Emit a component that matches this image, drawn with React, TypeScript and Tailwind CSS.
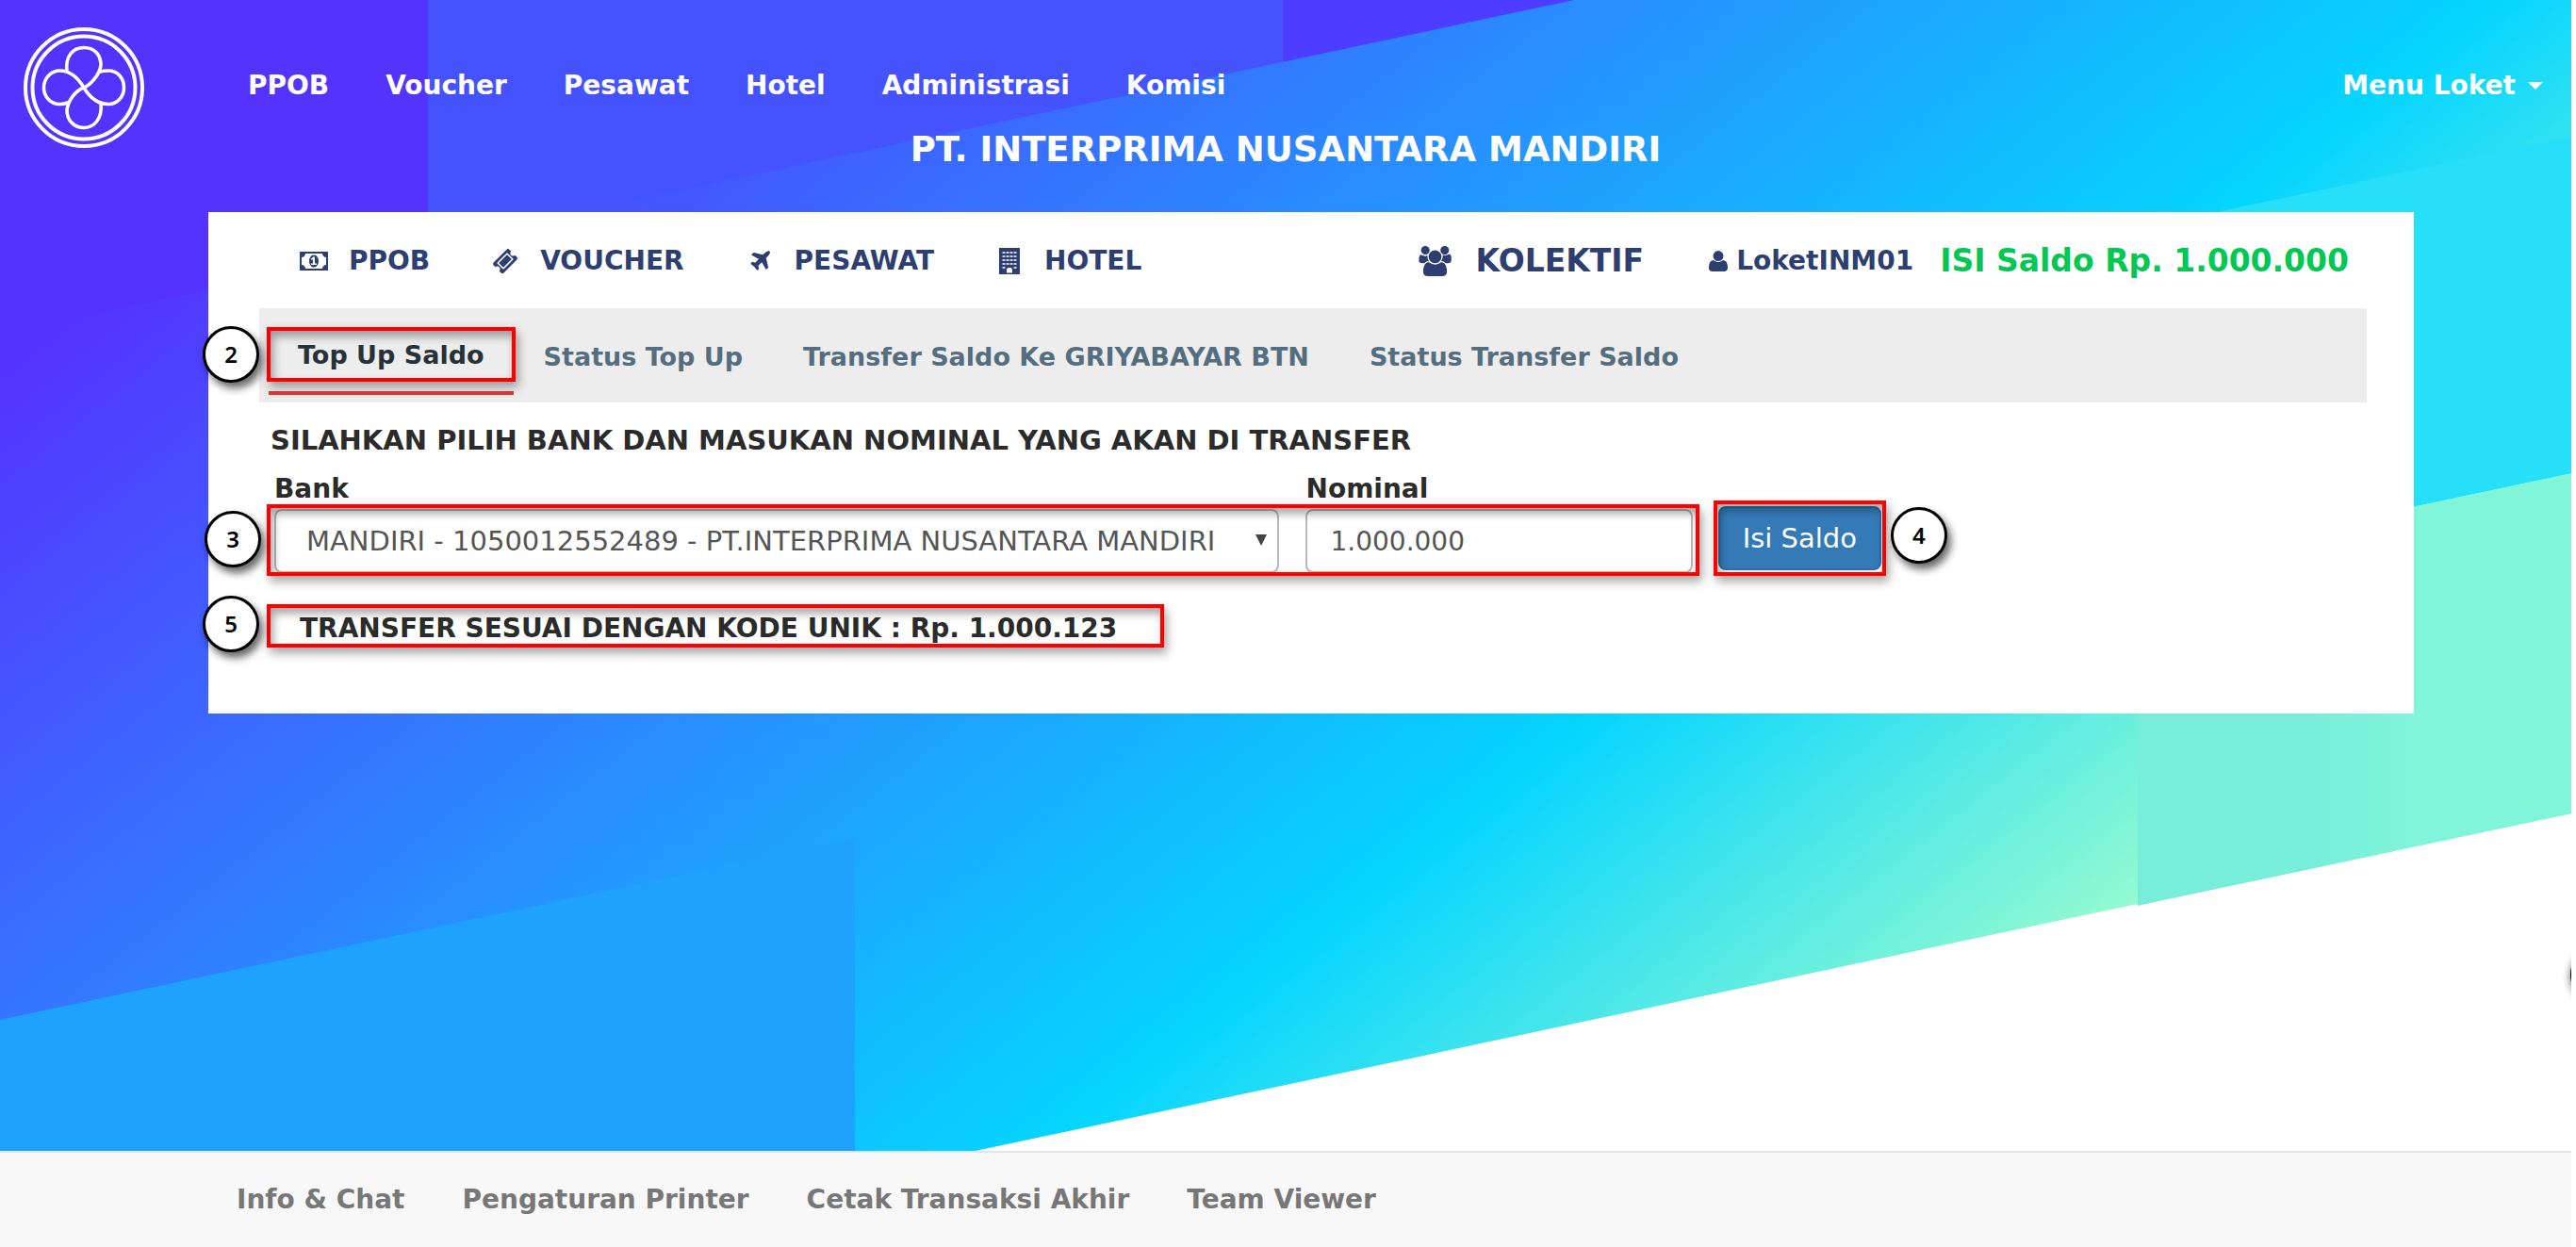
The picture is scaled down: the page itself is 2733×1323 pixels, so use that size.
import type { ReactNode } from "react";

const shadowBox =
  "pointer-events-none absolute border-4 border-[#ff0000] shadow-[3px_6px_10px_rgba(0,0,0,0.35),inset_3px_6px_10px_rgba(0,0,0,0.35)]";

function Callout({ n, className }: { n: string; className: string }) {
  return (
    <span
      className={`absolute flex size-[60px] items-center justify-center rounded-full border-3 border-black bg-white font-['Noto_Sans'] text-[24px] leading-none font-semibold text-black shadow-[4px_6px_8px_rgba(0,0,0,0.6)] ${className}`}
    >
      {n}
    </span>
  );
}

function Logo() {
  return (
    <svg viewBox="0 0 128 128" className="size-[128px]" fill="none" stroke="#fff" role="img" aria-label="Logo">
      <circle cx="64" cy="64" r="62" strokeWidth="4" />
      <circle cx="64" cy="64" r="54.5" strokeWidth="4" />
      <g strokeWidth="3.6" strokeLinecap="round">
        <path d="M46 47C44 31 52 21.500 64 21.500S82 30 82 40C81 50 71 61 64 64C55 67 47 78 46 88C46 99 54 106.500 64 106.500S84 98 82 80" />
        <path d="M82 47C84 46 88 46 90 46C100 46 106.500 54 106.500 64S99 81.500 90 81.500C78 81.500 70 74 64 64C58 54 50 46 38.500 46C29 46 21.500 54 21.500 64S29 81.500 38.500 81.500C41 81.500 44 81 46.500 80" />
      </g>
    </svg>
  );
}

function MoneyIcon() {
  return (
    <svg viewBox="0 256 1920 1280" className="h-[20px] w-[30px]" fill="currentColor" aria-hidden="true">
      <path d="M768 1152h384v-96h-128v-448h-114l-148 137 77 80q42-37 55-57h2v288h-128v96zm512-256q0 70-21 142t-59.5 134-101.5 101-138 39-138-39-101.5-101-59.5-134-21-142 21-142 59.5-134 101.5-101 138-39 138 39 101.5 101 59.5 134 21 142zm512 256v-512q-106 0-181-75t-75-181h-1152q0 106-75 181t-181 75v512q106 0 181 75t75 181h1152q0-106 75-181t181-75zm128-832v1152q0 26-19 45t-45 19h-1792q-26 0-45-19t-19-45v-1152q0-26 19-45t45-19h1792q26 0 45 19t19 45z" />
    </svg>
  );
}

function TicketIcon() {
  return (
    <svg viewBox="50 50 1692 1692" className="size-[26px]" fill="currentColor" aria-hidden="true">
      <path d="M1024 452l316 316-572 572-316-316zm-211 979l618-618q19-19 19-45t-19-45l-362-362q-18-18-45-18t-45 18l-618 618q-19 19-19 45t19 45l362 362q18 18 45 18t45-18zm889-637l-907 908q-37 37-90.5 37t-90.5-37l-126-126q56-56 56-136t-56-136-136-56-136 56l-125-126q-37-37-37-90.5t37-90.500l907-906q37-37 90.5-37t90.5 37l125 125q-56 56-56 136t56 136 136 56 136-56l126 125q37 37 37 90.5t-37 90.5z" />
    </svg>
  );
}

function PlaneIcon() {
  return (
    <svg viewBox="100 120 1500 1500" className="size-[22px]" fill="currentColor" aria-hidden="true">
      <path d="M1568 160q44 52 12 148t-108 172l-161 161 160 696q5 19-12 33l-128 96q-7 6-19 6-4 0-7-1-15-3-21-16l-279-508-259 259 53 194q5 17-8 31l-96 96q-9 9-23 9h-2q-15-2-24-13l-189-252-252-189q-11-7-13-23-1-13 9-25l96-97q9-9 23-9 6 0 8 1l194 53 259-259-508-279q-14-8-17-24-2-16 9-27l128-128q14-13 30-8l665 159 160-160q76-76 172-108t148 12z" />
    </svg>
  );
}

function BuildingIcon() {
  return (
    <svg viewBox="0 0 22 28" className="h-[28px] w-[22px]" aria-hidden="true">
      <path d="M0 0h22v28H0z" fill="currentColor" />
      <path
        d="M3.500 5h15M3.500 9h15M3.500 13h15M3.500 17h15M3.500 21h3M15.500 21h3"
        stroke="#fff"
        strokeWidth="1.500"
        strokeDasharray="3 1"
      />
      <path d="M8 26.500v-4l1.500-1.500h3l1.500 1.500v4z" fill="#fff" />
    </svg>
  );
}

function UsersIcon() {
  return (
    <svg viewBox="0 0 1920 1792" className="h-[32px] w-[35px]" fill="currentColor" aria-hidden="true">
      <path d="M593 896q-162 5-265 128h-134q-82 0-138-40.5t-56-118.5q0-353 124-353 6 0 43.5 21t97.5 42.5 119 21.5q67 0 133-23-5 37-5 66 0 159 93 294zm1071 637q0 120-73 189.5t-194 69.5h-874q-121 0-194-69.5t-73-189.5q0-53 3.5-103.5t14-109 26.5-108.5 43-97.5 62-81 85.5-53.5 111.5-20q10 0 43 21.5t73 48 107 48 135 21.5 135-21.5 107-48 73-48 43-21.5q61 0 111.5 20t85.5 53.5 62 81 43 97.5 26.5 108.5 14 109 3.5 103.5zm-1024-1277q0 106-75 181t-181 75-181-75-75-181 75-181 181-75 181 75 75 181zm704 384q0 159-112.500 271.5t-271.5 112.5-271.5-112.5-112.5-271.5 112.5-271.5 271.5-112.5 271.5 112.5 112.5 271.5zm576 225q0 78-56 118.5t-138 40.5h-134q-103-123-265-128 93-135 93-294 0-29-5-66 66 23 133 23 59 0 119-21.5t97.5-42.5 43.5-21q124 0 124 353zm-128-609q0 106-75 181t-181 75-181-75-75-181 75-181 181-75 181 75 75 181z" />
    </svg>
  );
}

function UserIcon() {
  return (
    <svg viewBox="0 256 1408 1536" className="h-[24px] w-[20px]" fill="currentColor" aria-hidden="true">
      <path d="M1408 1533q0 120-73 189.5t-194 69.5h-874q-121 0-194-69.5t-73-189.5q0-53 3.5-103.5t14-109 26.5-108.5 43-97.5 62-81 85.5-53.5 111.5-20q9 0 42 21.5t74.5 48 108 48 133.5 21.5 133.5-21.5 108-48 74.500-48 42-21.500q61 0 111.5 20t85.5 53.5 62 81 43 97.5 26.5 108.5 14 109 3.5 103.5zm-320-893q0 159-112.5 271.5t-271.5 112.5-271.5-112.5-112.5-271.5 112.5-271.5 271.5-112.5 271.5 112.5 112.5 271.5z" />
    </svg>
  );
}

function Stripes() {
  return (
    <div className="absolute inset-0 overflow-hidden" aria-hidden="true">
      <div className="absolute inset-x-0 -top-[63px] h-[1504px] origin-top-left -skew-y-12 bg-[linear-gradient(150deg,#5533ff_15%,#05d5ff_70%,#a6ffcb_94%)]">
        <div className="mr-[6px] grid grid-cols-6 grid-rows-[418px_370px_357px_361px]">
          <span className="col-start-1 row-start-1 bg-[#5533ff]" />
          <span className="col-span-2 col-start-2 row-start-1 bg-[#4553ff]" />
          <span className="col-span-3 col-start-4 row-start-1 bg-[#4f3dff]" />
          <span className="col-span-2 col-start-5 row-start-3 -mr-[6px] bg-[#26dff9]" />
          <span className="col-span-2 col-start-1 row-start-4 bg-[#1fa2ff]" />
          <span className="col-start-6 row-start-4 -mr-[6px] bg-[linear-gradient(90deg,#76eed9_40%,#81f5da_64%)]" />
        </div>
      </div>
    </div>
  );
}

function ServiceLink({ icon, children }: { icon: ReactNode; children: ReactNode }) {
  return (
    <a href="#" className="flex items-center gap-[22px]">
      <span className="flex w-[30px] justify-center">{icon}</span>
      {children}
    </a>
  );
}

const mainMenu = ["PPOB", "Voucher", "Pesawat", "Hotel", "Administrasi", "Komisi"];
const tabs = ["Status Top Up", "Transfer Saldo Ke GRIYABAYAR BTN", "Status Transfer Saldo"];
const footerMenu = ["Info & Chat", "Pengaturan Printer", "Cetak Transaksi Akhir", "Team Viewer"];

export default function App() {
  return (
    <div className="flex min-h-screen flex-col overflow-hidden bg-white pr-[5px] font-['Verdana','DejaVu_Sans',sans-serif] text-[28px] leading-[40px] font-bold whitespace-nowrap">
      <div className="relative flex-1 overflow-hidden">
        <Stripes />
        <div className="relative">
          <header className="flex h-[135px] items-start pt-[29px] pr-[30px] pl-[25px] text-white">
            <Logo />
            <nav className="mt-[42px] ml-[110px] flex gap-[60px]">
              {mainMenu.map((item) => (
                <a key={item} href="#">
                  {item}
                </a>
              ))}
            </nav>
            <button type="button" className="mt-[42px] ml-auto flex items-center gap-[13px]">
              Menu Loket
              <svg viewBox="0 0 16 8" className="h-[8px] w-[16px]" fill="#fff" aria-hidden="true">
                <path d="M0 0h16l-8 8z" />
              </svg>
            </button>
          </header>
          <h1 className="text-center text-[37px] leading-[48px] text-white">PT. INTERPRIMA NUSANTARA MANDIRI</h1>

          <main className="mt-[42px] mr-[167px] ml-[221px] bg-white pb-[70px] text-[#2b2b2b]">
            <div className="flex pt-[32px] pr-[69px] pl-[97px] text-[#2c3f70]">
              <nav className="flex gap-[65px]">
                <ServiceLink icon={<MoneyIcon />}>PPOB</ServiceLink>
                <ServiceLink icon={<TicketIcon />}>VOUCHER</ServiceLink>
                <ServiceLink icon={<PlaneIcon />}>PESAWAT</ServiceLink>
                <ServiceLink icon={<BuildingIcon />}>HOTEL</ServiceLink>
              </nav>
              <div className="ml-auto flex items-center text-[33px]">
                <a href="#" className="flex items-center gap-[26px]">
                  <UsersIcon />
                  KOLEKTIF
                </a>
                <a href="#" className="ml-[69px] flex items-center gap-[9px] text-[28px]">
                  <UserIcon />
                  LoketINM01
                </a>
                <a href="#" className="ml-[28px] text-[#00c853]">
                  ISI Saldo Rp. 1.000.000
                </a>
              </div>
            </div>

            <nav className="mt-[30px] mr-[50px] ml-[54px] flex h-[100px] bg-[#ededed] pl-[10px] text-[27px] text-[#546e7f]">
              <a
                href="#"
                aria-current="page"
                className="relative h-[92px] border-b-4 border-[#e53935] px-[31px] pt-[30px] text-[#263238]"
              >
                Top Up Saldo
                <span className={`${shadowBox} top-[20px] -right-[2px] -left-[2px] h-[58px]`} />
                <Callout n="2" className="top-[19px] -left-[70px]" />
              </a>
              {tabs.map((tab) => (
                <a key={tab} href="#" className="px-[32px] pt-[32px]">
                  {tab}
                </a>
              ))}
            </nav>

            <h2 className="mt-[20px] ml-[66px] text-[29px]">
              SILAHKAN PILIH BANK DAN MASUKAN NOMINAL YANG AKAN DI TRANSFER
            </h2>
            <form className="mt-[12px] mr-[13px] ml-[70px] flex items-end" onSubmit={(e) => e.preventDefault()}>
              <div className="relative grid w-2/3 grid-cols-[13fr_5fr] gap-[28px]">
                <div>
                  <label htmlFor="bank" className="block">
                    Bank
                  </label>
                  <div className="relative">
                    <select
                      id="bank"
                      className="mt-px block h-[68px] w-full appearance-none rounded-[8px] border-2 border-[#b8b8b8] bg-white px-[32px] text-[29px] font-normal text-[#555]"
                    >
                      <option>MANDIRI - 1050012552489 - PT.INTERPRIMA NUSANTARA MANDIRI</option>
                    </select>
                    <svg
                      viewBox="0 0 12 12"
                      className="pointer-events-none absolute top-[27px] right-[13px] size-[12px]"
                      fill="#444"
                      aria-hidden="true"
                    >
                      <path d="M0 0h12L6 12z" />
                    </svg>
                  </div>
                </div>
                <div>
                  <label htmlFor="nominal" className="block">
                    Nominal
                  </label>
                  <input
                    id="nominal"
                    type="text"
                    defaultValue="1.000.000"
                    className="mt-px block h-[68px] w-full rounded-[8px] border-2 border-[#b8b8b8] bg-white px-[24px] font-normal text-[#555]"
                  />
                </div>
                <span className={`${shadowBox} -right-[7px] -bottom-[3px] -left-[8px] h-[76px]`} />
                <Callout n="3" className="-left-[74px] bottom-[6px]" />
              </div>
              <div className="relative mb-[3px] ml-[27px]">
                <button
                  type="submit"
                  className="block h-[68px] rounded-[8px] border-2 border-[#2e6da4] bg-[#337ab7] px-[24px] text-[29px] font-normal text-white"
                >
                  Isi Saldo
                </button>
                <span className={`${shadowBox} -inset-x-[5px] -inset-y-[6px]`} />
                <Callout n="4" className="top-[1px] -right-[70px]" />
              </div>
            </form>

            <p className="relative mt-[39px] ml-[62px] inline-block pr-[50px] pl-[35px]">
              TRANSFER SESUAI DENGAN KODE UNIK : Rp. 1.000.123
              <span className={`${shadowBox} inset-x-0 -top-[6px] h-[46px]`} />
              <Callout n="5" className="-top-[15px] -left-[68px]" />
            </p>
          </main>
        </div>
        <span
          aria-hidden="true"
          className="absolute top-[1004px] -right-[59px] size-[60px] rounded-full border-2 border-black bg-white shadow-[0_2px_8px_rgba(0,0,0,0.6)]"
        />
      </div>

      <footer className="h-[102px] border-t-2 border-[#e4e4e4] bg-[#f8f8f8] pt-[30px] pl-[251px] text-[#777]">
        <nav className="flex gap-[61px]">
          {footerMenu.map((item) => (
            <a key={item} href="#">
              {item}
            </a>
          ))}
        </nav>
      </footer>
    </div>
  );
}
